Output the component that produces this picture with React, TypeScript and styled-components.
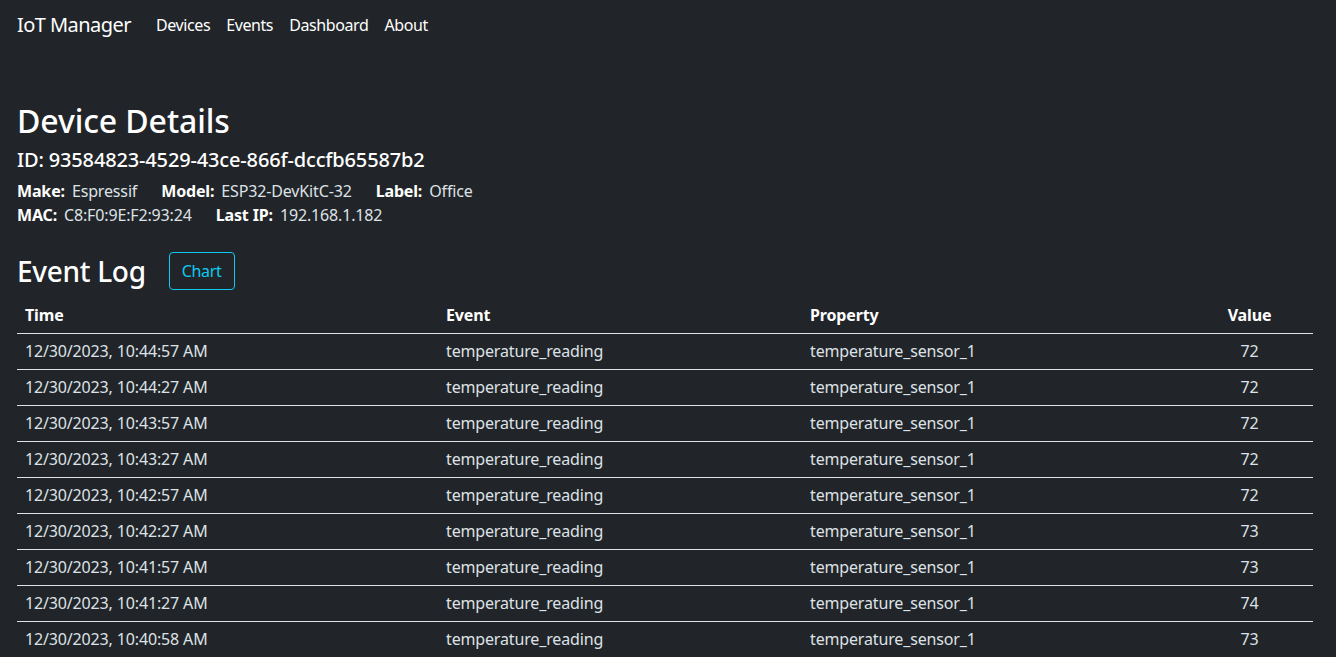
import React from "react";
import styled, { createGlobalStyle } from "styled-components";

const Global = createGlobalStyle`
  html, body { margin: 0; padding: 0; background: #212529; }
  body {
    font-family: "Noto Sans", "Open Sans", sans-serif;
    color: #dee2e6;
    font-size: 16px;
    line-height: 1.5;
    letter-spacing: -0.15px;
  }
  * { box-sizing: border-box; }
`;

const Nav = styled.nav`
  display: flex;
  align-items: center;
  height: 50px;
  padding: 0 17px;
`;

const Brand = styled.a`
  font-size: 20px;
  color: #fff;
  margin-right: 25px;
  text-decoration: none;
  letter-spacing: -0.55px;
`;

const NavLinks = styled.div`
  display: flex;
  gap: 16px;
`;

const NavLink = styled.a`
  color: #fff;
  font-size: 16px;
  text-decoration: none;
  letter-spacing: -0.4px;
`;

const Main = styled.main`
  padding: 52px 23px 0 17px;
`;

const Title = styled.h2`
  margin: 0 0 8px;
  font-size: 32px;
  font-weight: 500;
  line-height: 1.2;
  color: #fff;
  letter-spacing: -0.1px;
`;

const DeviceId = styled.h5`
  margin: 0 0 7px;
  font-size: 20px;
  font-weight: 500;
  line-height: 1.2;
  color: #fff;
`;

const InfoRow = styled.div`
  display: flex;
  gap: 24px;
  font-size: 16px;
  line-height: 24px;
`;

const Field = styled.span`
  color: #dee2e6;
`;

const Label = styled.b`
  font-weight: 700;
  color: #fff;
  margin-right: 7px;
`;

const LogHeader = styled.div`
  display: flex;
  align-items: center;
  gap: 23px;
  margin: 25px 0 8px;
`;

const SubTitle = styled.h3`
  margin: 0;
  font-size: 28px;
  font-weight: 500;
  line-height: 1.2;
  color: #fff;
  letter-spacing: -0.3px;
`;

const OutlineButton = styled.button`
  font-family: inherit;
  font-size: 16px;
  line-height: 24px;
  letter-spacing: -0.3px;
  padding: 6px 12px;
  height: 38px;
  background: transparent;
  color: #0dcaf0;
  border: 1px solid #0dcaf0;
  border-radius: 4px;
`;

const Table = styled.table`
  width: 100%;
  border-collapse: collapse;
  table-layout: fixed;
`;

const Th = styled.th<{ $center?: boolean; $w?: number }>`
  text-align: ${(p) => (p.$center ? "center" : "left")};
  width: ${(p) => (p.$w ? `${p.$w}px` : "auto")};
  padding: 5px 8px;
  line-height: 25px;
  font-weight: 700;
  color: #fff;
  border-bottom: 1px solid #dee2e6;
`;

const Td = styled.td<{ $center?: boolean }>`
  text-align: ${(p) => (p.$center ? "center" : "left")};
  padding: 5px 8px;
  line-height: 25px;
  color: #dee2e6;
  border-bottom: 1px solid #dee2e6;
  white-space: nowrap;
`;

const rows = [
  ["12/30/2023, 10:44:57 AM", "72"],
  ["12/30/2023, 10:44:27 AM", "72"],
  ["12/30/2023, 10:43:57 AM", "72"],
  ["12/30/2023, 10:43:27 AM", "72"],
  ["12/30/2023, 10:42:57 AM", "72"],
  ["12/30/2023, 10:42:27 AM", "73"],
  ["12/30/2023, 10:41:57 AM", "73"],
  ["12/30/2023, 10:41:27 AM", "74"],
  ["12/30/2023, 10:40:58 AM", "73"],
];

export default function App() {
  return (
    <>
      <Global />
      <Nav>
        <Brand href="#">IoT Manager</Brand>
        <NavLinks>
          <NavLink href="#">Devices</NavLink>
          <NavLink href="#">Events</NavLink>
          <NavLink href="#">Dashboard</NavLink>
          <NavLink href="#">About</NavLink>
        </NavLinks>
      </Nav>
      <Main>
        <Title>Device Details</Title>
        <DeviceId>ID: 93584823-4529-43ce-866f-dccfb65587b2</DeviceId>
        <InfoRow>
          <Field><Label>Make:</Label>Espressif</Field>
          <Field><Label>Model:</Label>ESP32-DevKitC-32</Field>
          <Field><Label>Label:</Label>Office</Field>
        </InfoRow>
        <InfoRow>
          <Field><Label>MAC:</Label>C8:F0:9E:F2:93:24</Field>
          <Field><Label>Last IP:</Label>192.168.1.182</Field>
        </InfoRow>
        <LogHeader>
          <SubTitle>Event Log</SubTitle>
          <OutlineButton>Chart</OutlineButton>
        </LogHeader>
        <Table>
          <thead>
            <tr>
              <Th $w={421}>Time</Th>
              <Th $w={364}>Event</Th>
              <Th $w={384}>Property</Th>
              <Th $center>Value</Th>
            </tr>
          </thead>
          <tbody>
            {rows.map(([t, v]) => (
              <tr key={t}>
                <Td>{t}</Td>
                <Td>temperature_reading</Td>
                <Td>temperature_sensor_1</Td>
                <Td $center>{v}</Td>
              </tr>
            ))}
          </tbody>
        </Table>
      </Main>
    </>
  );
}
